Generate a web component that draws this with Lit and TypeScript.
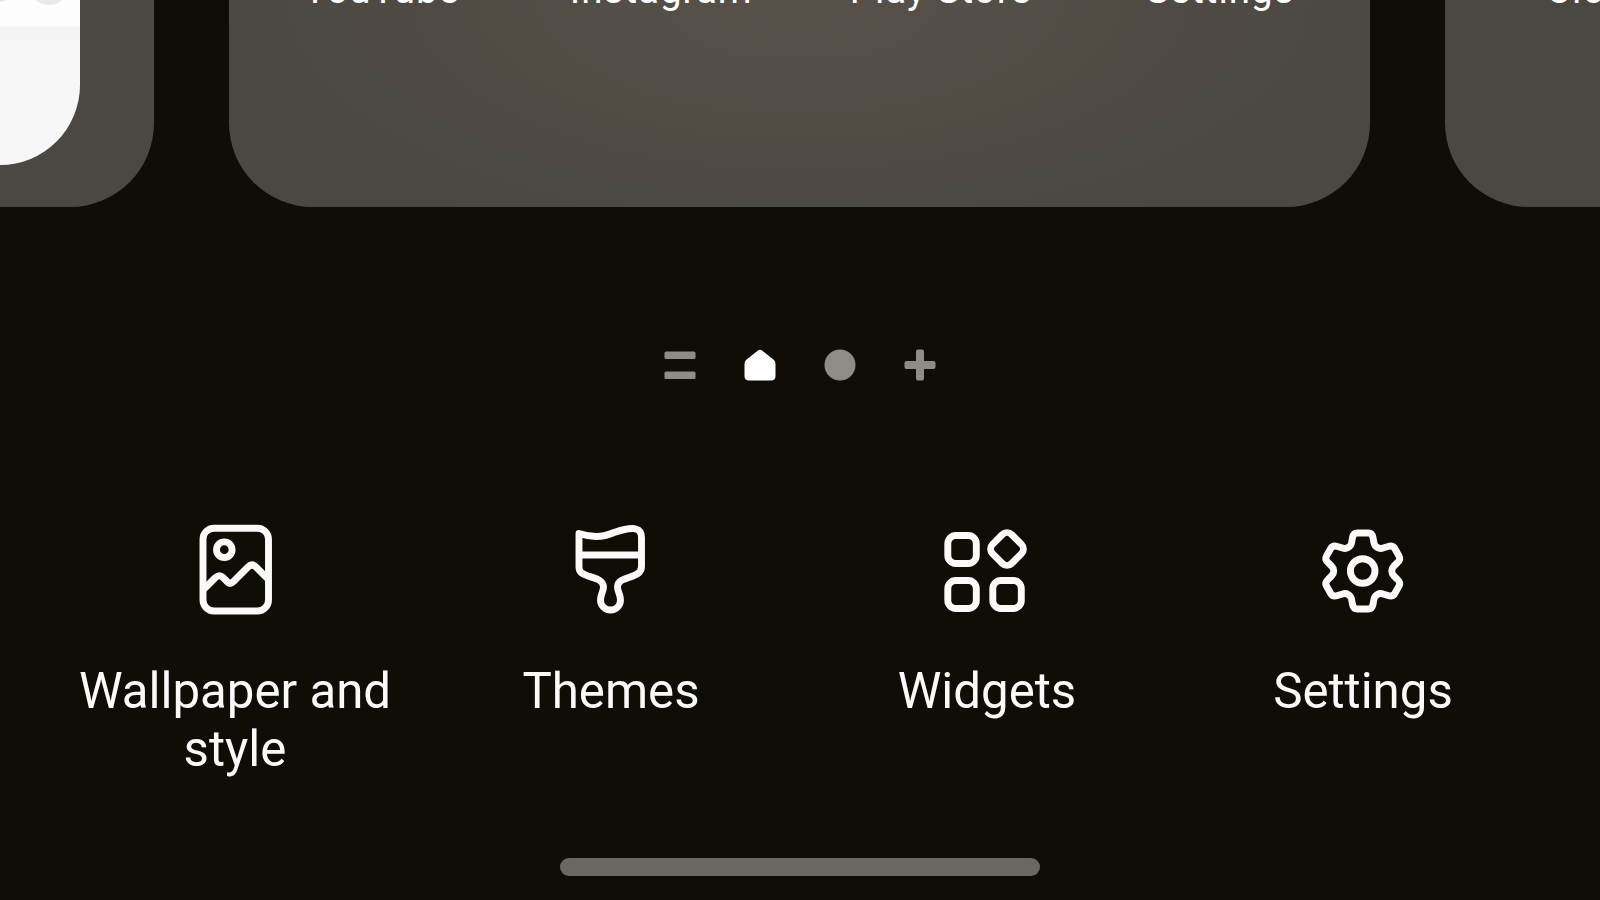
import { LitElement, css, html, svg } from 'lit';
import { customElement, property } from 'lit/decorators.js';

const icons: Record<string, unknown> = {
  wallpaper: svg`
    <rect x="23" y="18.200" width="65.500" height="82.800" rx="11" />
    <circle cx="44.300" cy="39.700" r="7.800" />
    <path d="M24 79L35.500 67.500Q39.500 64 43 67.500L48 72.500Q50.500 74.500 53.500 71.500L68 57Q72 53 76 57L88 69" />
  `,
  themes: svg`
    <path d="M23 23.500C35 27.500 47 27.500 58 22.500C67 19.500 75 17.500 80 19Q85.500 20.500 85.500 27.500V56C85.500 62 82 64 77 66C69 69 61.500 70 61.500 77C61.500 82 64.500 84 64.500 90A10 10 0 0 1 44.500 90C44.500 84 47.500 82 47.500 77C47.500 70 39 68 32 66C26 64 23 62 23 57Z" />
    <path d="M23 45H85.500" />
  `,
  widgets: svg`
    <rect x="15.800" y="25.500" width="28.500" height="28" rx="8" />
    <rect x="15.800" y="70.500" width="28.500" height="28" rx="8" />
    <rect x="60.800" y="70.500" width="28.500" height="28" rx="8" />
    <rect x="61.500" y="25.500" width="27" height="27" rx="6.500" transform="rotate(45 75 39)" />
  `,
  settings: svg`
    <g transform="translate(2 0)">
      <path d="M42.500 27.500Q43.500 23 47 23H58.500Q62 23 63 27.500L64 33C65 37 69 39.500 73 38L78 36.500Q82.500 35 84.500 38L89 46Q91 49.500 87.500 52.500L84 56C81 59 81 63 84 66L87.500 69.500Q91 72.500 89 76L84.500 84Q82.500 87 78 85.500L73 84C69 82.500 65 85 64 89L63 94.500Q62 99 58.500 99H47Q43.500 99 42.500 94.500L41.500 89C40.500 85 36.500 82.500 32.500 84L27.500 85.500Q23 87 21 84L16.500 76Q14.500 72.500 18 69.500L21.500 66C24.500 63 24.500 59 21.500 56L18 52.500Q14.500 49.500 16.500 46L21 38Q23 35 27.500 36.500L32.500 38C36.500 39.500 40.500 37 41.500 33Z" />
      <circle cx="52.700" cy="61" r="12.300" />
    </g>
  `,
};

@customElement('home-action')
export class HomeAction extends LitElement {
  static styles = css`
    :host {
      display: flex;
      flex-direction: column;
      align-items: center;
      color: #fbfaf8;
    }
    .icon {
      display: block;
      width: 110px;
      height: 120px;
      fill: none;
      stroke: currentColor;
      stroke-width: 6.9;
      stroke-linejoin: round;
    }
    .label {
      width: 330px;
      margin-top: 32px;
      font-size: 49.2px;
      line-height: 58px;
      text-align: center;
    }
  `;

  @property()
  icon = '';

  @property()
  label = '';

  render() {
    return html`
      <svg class="icon" viewBox="0 0 110 120">${icons[this.icon]}</svg>
      <div class="label">${this.label}</div>
    `;
  }
}

@customElement('page-indicator')
export class PageIndicator extends LitElement {
  static styles = css`
    :host {
      display: flex;
      justify-content: center;
      gap: 48px;
    }
    .mark {
      width: 32px;
      height: 32px;
      fill: #8f8c87;
    }
    .active {
      fill: #fff;
    }
  `;

  render() {
    return html`
      <svg class="mark" viewBox="0 0 32 32">
        <rect x="0.5" y="2.500" width="31" height="7.500" rx="1.500" />
        <rect x="0.5" y="22.500" width="31" height="7.500" rx="1.500" />
      </svg>
      <svg class="mark active" viewBox="0 0 32 32">
        <path d="M14 1.500Q16 0 18 1.500L30 11Q31.500 12.500 31.500 15V27Q31.500 31.500 27 31.500H5Q0.500 31.500 0.500 27V15Q0.500 12.500 2 11Z" />
      </svg>
      <svg class="mark" viewBox="0 0 32 32">
        <circle cx="16" cy="16" r="15.500" />
      </svg>
      <svg class="mark" viewBox="0 0 32 32">
        <path d="M14 0.500H18Q20 0.500 20 2.500V12H29.500Q31.500 12 31.500 14V18Q31.500 20 29.500 20H20V29.500Q20 31.500 18 31.500H14Q12 31.500 12 29.500V20H2.500Q0.500 20 0.500 18V14Q0.500 12 2.500 12H12V2.500Q12 0.500 14 0.500Z" />
      </svg>
    `;
  }
}

@customElement('app-root')
export class AppRoot extends LitElement {
  static styles = css`
    :host {
      display: flex;
      flex-direction: column;
      width: 1600px;
      height: 900px;
      overflow: hidden;
      background: #100d07;
      font-family: Roboto, sans-serif;
    }
    .pages {
      display: grid;
      grid-template-columns: 154px 1141px 155px;
      column-gap: 75px;
      height: 206.7px;
      overflow: hidden;
    }
    .page {
      overflow: hidden;
      background: #4b4743;
    }
    .previous {
      border-radius: 0 0 84px 0;
    }
    .current {
      display: flex;
      border-radius: 0 0 84px 84px;
      background: radial-gradient(ellipse 600px 260px at 50% 0, #57514a, #504c44 55%, #4b4743);
    }
    .next {
      border-radius: 0 0 0 84px;
    }
    .panel {
      width: 79.5px;
      height: 165px;
      overflow: hidden;
      border-radius: 0 0 84px 0;
      background: linear-gradient(#fdfdfd 26px, #f3f3f3 27px, #f7f7f8 50px);
    }
    .bubbles {
      display: block;
      fill: #e9e9eb;
    }
    .app {
      flex: none;
      width: 279.5px;
      margin-top: -33px;
      color: #fff;
      font-size: 38.5px;
      letter-spacing: 1px;
      line-height: 46px;
      text-align: center;
      white-space: nowrap;
    }
    .current .app:first-child {
      margin-left: 13px;
    }
    .next .app {
      margin-left: 101px;
      text-align: left;
    }
    .indicator {
      margin-top: 142.3px;
    }
    .actions {
      display: grid;
      grid-template-columns: repeat(4, 376px);
      margin-top: 129px;
      padding-left: 47px;
    }
    .handle {
      width: 480px;
      height: 18px;
      margin: auto auto 24px;
      border-radius: 9px;
      background: #6b6863;
    }
  `;

  apps = ['YouTube', 'Instagram', 'Play Store', 'Settings'];

  actions = [
    {icon: 'wallpaper', label: 'Wallpaper and style'},
    {icon: 'themes', label: 'Themes'},
    {icon: 'widgets', label: 'Widgets'},
    {icon: 'settings', label: 'Settings'},
  ];

  render() {
    return html`
      <div class="pages">
        <div class="page previous">
          <div class="panel">
            <svg class="bubbles" width="79" height="20" viewBox="0 0 79 20">
              <ellipse cx="0" cy="-9" rx="12" ry="11" />
              <ellipse cx="49" cy="-9" rx="17" ry="14" />
            </svg>
          </div>
        </div>
        <div class="page current">
          ${this.apps.map((name) => html`<div class="app">${name}</div>`)}
        </div>
        <div class="page next">
          <div class="app">Clock</div>
        </div>
      </div>
      <page-indicator class="indicator"></page-indicator>
      <div class="actions">
        ${this.actions.map(({icon, label}) => html`
          <home-action icon="${icon}" label="${label}"></home-action>
        `)}
      </div>
      <div class="handle"></div>
    `;
  }
}
